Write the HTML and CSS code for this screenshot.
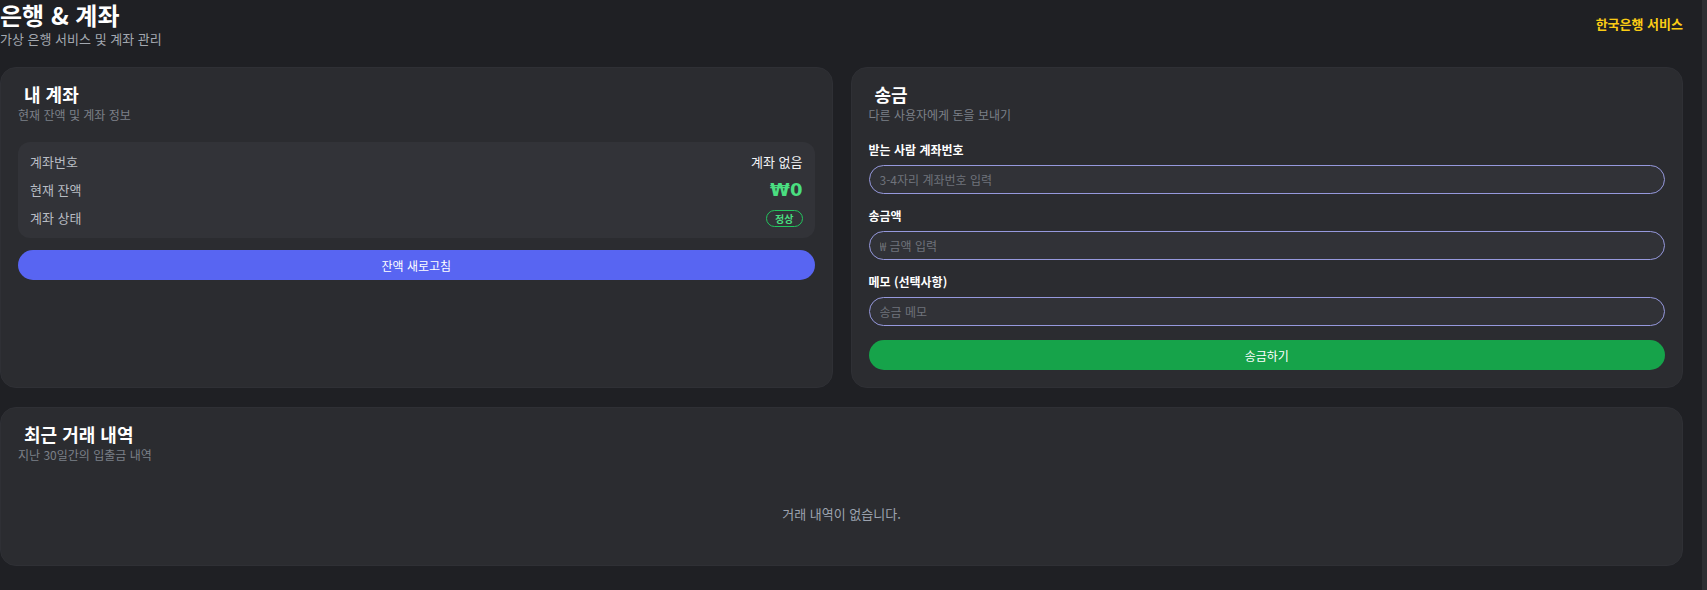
FILE: index.html
```html
<!DOCTYPE html>
<html lang="ko">
<head>
<meta charset="utf-8">
<title>은행 &amp; 계좌</title>
<link rel="stylesheet" href="styles.css">
</head>
<body>
<div class="app">
  <main class="page">
    <header class="top">
      <div class="brand">
        <h1 class="brand-title">은행 &amp; 계좌</h1>
        <p class="brand-sub">가상 은행 서비스 및 계좌 관리</p>
      </div>
      <span class="brand-tag">한국은행 서비스</span>
    </header>

    <section class="grid">
      <article class="card">
        <div class="card-head">
          <h2 class="card-title">내 계좌</h2>
          <p class="card-sub">현재 잔액 및 계좌 정보</p>
        </div>
        <div class="info">
          <div class="info-row">
            <span class="info-label">계좌번호</span>
            <span class="info-value">계좌 없음</span>
          </div>
          <div class="info-row row-balance">
            <span class="info-label">현재 잔액</span>
            <span class="balance">₩0</span>
          </div>
          <div class="info-row">
            <span class="info-label">계좌 상태</span>
            <span class="badge">정상</span>
          </div>
        </div>
        <button class="btn btn-indigo" type="button">잔액 새로고침</button>
      </article>

      <article class="card">
        <div class="card-head">
          <h2 class="card-title">송금</h2>
          <p class="card-sub">다른 사용자에게 돈을 보내기</p>
        </div>
        <form class="form">
          <div class="field">
            <label class="field-label">받는 사람 계좌번호</label>
            <input class="input" type="text" placeholder="3-4자리 계좌번호 입력">
          </div>
          <div class="field">
            <label class="field-label">송금액</label>
            <input class="input" type="text" placeholder="₩ 금액 입력">
          </div>
          <div class="field">
            <label class="field-label">메모 (선택사항)</label>
            <input class="input" type="text" placeholder="송금 메모">
          </div>
          <button class="btn btn-green" type="button">송금하기</button>
        </form>
      </article>
    </section>

    <section class="card history">
      <div class="card-head">
        <h2 class="card-title">최근 거래 내역</h2>
        <p class="card-sub">지난 30일간의 입출금 내역</p>
      </div>
      <div class="empty">거래 내역이 없습니다.</div>
    </section>
  </main>
  <div class="scroll-strip"></div>
</div>
</body>
</html>
```

FILE: styles.css
```css
* { box-sizing: border-box; }

html, body {
  margin: 0;
  padding: 0;
  background: #1f2024;
}

body {
  font-family: "Noto Sans CJK KR", "Noto Sans", sans-serif;
  color: #f3f4f6;
}

.app {
  display: flex;
  min-height: 100vh;
}

.page {
  flex: none;
  width: 1683px;
  margin-right: 19px;
}

.scroll-strip {
  flex: none;
  width: 5px;
  background: #2d2e32;
}

/* header */
.top {
  display: flex;
  justify-content: space-between;
  align-items: center;
  height: 47px;
  margin-bottom: 20px;
}

.brand-title {
  margin: 0;
  font-size: 24px;
  font-weight: 700;
  line-height: 29px;
  color: #ffffff;
}

.brand-sub {
  margin: 1px 0 0;
  font-size: 13px;
  line-height: 17px;
  color: #a3a8b0;
}

.brand-tag {
  font-size: 13px;
  font-weight: 700;
  color: #facc15;
}

/* cards */
.grid {
  display: grid;
  grid-template-columns: 1fr 1fr;
  gap: 18px;
  margin-bottom: 19px;
}

.card {
  background: #2b2c30;
  border: 1px solid #2f3035;
  border-radius: 16px;
  padding: 17px;
}

.card-head {
  margin-bottom: 19px;
}

.card-title {
  margin: 0;
  padding-left: 6px;
  font-size: 18px;
  font-weight: 700;
  line-height: 18px;
  color: #ffffff;
}

.card-sub {
  margin: 4px 0 0;
  font-size: 12px;
  line-height: 16px;
  color: #7c8088;
}

/* account info */
.info {
  display: flex;
  flex-direction: column;
  gap: 6px;
  padding: 10px 12px;
  background: #323338;
  border-radius: 12px;
}

.info-row {
  display: flex;
  justify-content: space-between;
  align-items: center;
  height: 20px;
}

.row-balance {
  height: 24px;
}

.info-label {
  font-size: 13px;
  line-height: 20px;
  color: #b8bcc3;
}

.info-value {
  font-size: 13px;
  line-height: 20px;
  color: #f3f4f6;
}

.balance {
  font-family: "DejaVu Sans", "Noto Sans CJK KR", sans-serif;
  font-size: 18px;
  font-weight: 700;
  line-height: 24px;
  color: #4ade80;
}

.badge {
  display: inline-block;
  height: 17px;
  padding: 0 8px;
  border: 1px solid #22c55e;
  border-radius: 999px;
  font-size: 10px;
  font-weight: 700;
  line-height: 15px;
  color: #4ade80;
}

/* buttons */
.btn {
  display: block;
  width: 100%;
  height: 30px;
  border: none;
  border-radius: 999px;
  font-family: inherit;
  font-size: 12px;
  font-weight: 400;
  color: #ffffff;
  cursor: pointer;
}

.btn-indigo {
  margin-top: 12px;
  background: #5865f2;
}

.btn-green {
  background: #16a34a;
}

/* form */
.form {
  display: flex;
  flex-direction: column;
  gap: 14px;
}

.field {
  display: flex;
  flex-direction: column;
}

.field-label {
  margin-bottom: 7px;
  font-size: 12px;
  font-weight: 700;
  line-height: 16px;
  color: #ffffff;
}

.input {
  width: 100%;
  height: 29px;
  padding: 0 10px;
  background: #313237;
  border: 1px solid #9699dd;
  border-radius: 999px;
  font-family: inherit;
  font-size: 12px;
  color: #f3f4f6;
  outline: none;
}

.input::placeholder {
  color: #6f737b;
}

/* history */
.empty {
  padding: 22px 0 24px;
  text-align: center;
  font-size: 13px;
  line-height: 20px;
  color: #9ca3af;
}
```
